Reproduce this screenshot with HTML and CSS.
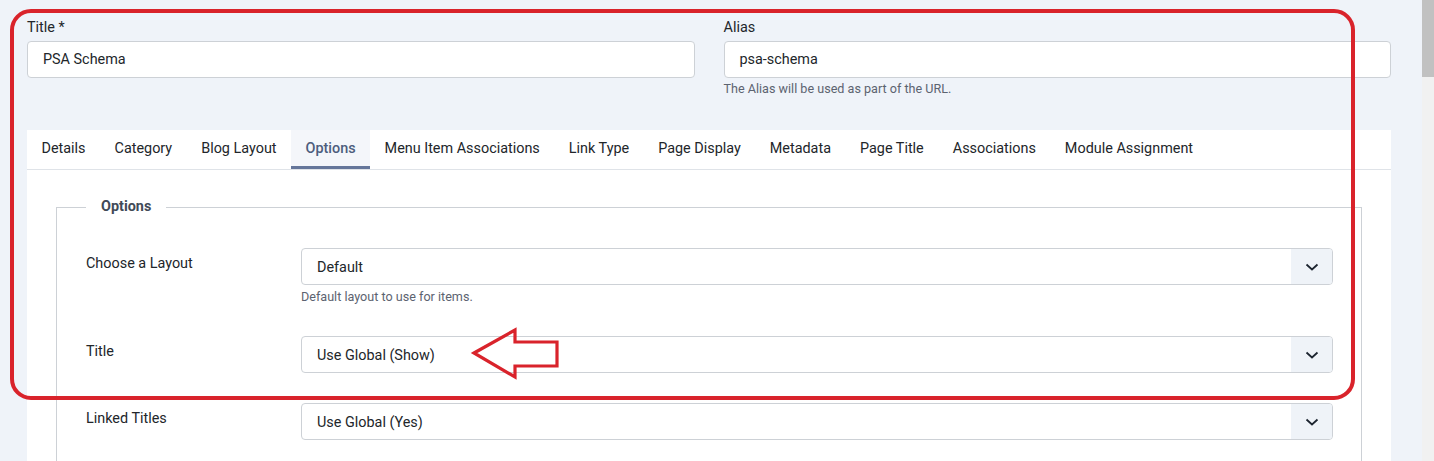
FILE: index.html
```html
<!DOCTYPE html>
<html lang="en">
<head>
    <meta charset="UTF-8">
    <meta name="viewport" content="width=device-width, initial-scale=1.0">
    <title>Edit Menu Item</title>
    <link rel="stylesheet" href="styles.css">
</head>
<body>
<div class="viewport">
    <div class="page">
        <!-- Title / Alias -->
        <div class="top-row">
            <div class="field">
                <label class="field-label">Title *</label>
                <div class="input">PSA Schema</div>
            </div>
            <div class="field">
                <label class="field-label">Alias</label>
                <div class="input">psa-schema</div>
                <div class="help">The Alias will be used as part of the URL.</div>
            </div>
        </div>

        <!-- Tabs -->
        <div class="card">
            <ul class="tabs">
                <li>Details</li>
                <li>Category</li>
                <li>Blog Layout</li>
                <li class="active">Options</li>
                <li>Menu Item Associations</li>
                <li>Link Type</li>
                <li>Page Display</li>
                <li>Metadata</li>
                <li>Page Title</li>
                <li>Associations</li>
                <li>Module Assignment</li>
            </ul>

            <div class="tab-content">
                <fieldset class="options">
                    <legend>Options</legend>

                    <div class="control-group">
                        <div class="control-label">Choose a Layout</div>
                        <div class="controls">
                            <div class="select">
                                <span class="select-value">Default</span>
                                <span class="select-btn"><svg width="14" height="8" viewBox="0 0 14 8"><path d="M1.5 1.5 L7 6.5 L12.5 1.5" fill="none" stroke="#1d2530" stroke-width="1.8"/></svg></span>
                            </div>
                            <div class="help">Default layout to use for items.</div>
                        </div>
                    </div>

                    <div class="control-group">
                        <div class="control-label">Title</div>
                        <div class="controls">
                            <div class="select">
                                <span class="select-value">Use Global (Show)</span>
                                <span class="select-btn"><svg width="14" height="8" viewBox="0 0 14 8"><path d="M1.5 1.5 L7 6.5 L12.5 1.5" fill="none" stroke="#1d2530" stroke-width="1.8"/></svg></span>
                            </div>
                        </div>
                    </div>

                    <div class="control-group">
                        <div class="control-label">Linked Titles</div>
                        <div class="controls">
                            <div class="select">
                                <span class="select-value">Use Global (Yes)</span>
                                <span class="select-btn"><svg width="14" height="8" viewBox="0 0 14 8"><path d="M1.5 1.5 L7 6.5 L12.5 1.5" fill="none" stroke="#1d2530" stroke-width="1.8"/></svg></span>
                            </div>
                        </div>
                    </div>
                </fieldset>
            </div>
        </div>
    </div>

    <!-- fake scrollbar -->
    <div class="scrollbar"><div class="thumb"></div></div>
</div>

<!-- red annotation drawn over the screenshot -->
<svg class="annotation" width="1434" height="461" viewBox="0 0 1434 461">
    <rect x="12" y="11" width="1341" height="387" rx="19" ry="19" fill="none" stroke="#d9232b" stroke-width="4"/>
    <path d="M474 353 L515 330 L515 342 L557 342 L557 366 L515 366 L515 377 Z" fill="none" stroke="#d9232b" stroke-width="3.2" stroke-linejoin="miter"/>
</svg>
</body>
</html>
```

FILE: styles.css
```css
* {
    box-sizing: border-box;
    margin: 0;
    padding: 0;
}

body {
    background-color: #eff3f9;
    color: #22262a;
    font-family: Roboto, 'Liberation Sans', sans-serif;
    font-size: 14.4px;
    width: 1434px;
    height: 461px;
    overflow: hidden;
    position: relative;
}

.viewport {
    display: flex;
    height: 461px;
}

.page {
    flex: 1;
    padding: 16px 31px 0 27px;
}

/* Title / Alias row */
.top-row {
    display: grid;
    grid-template-columns: 1fr 1fr;
    column-gap: 29px;
}

.field-label {
    display: block;
    line-height: 20px;
    padding-top: 2px;
    margin-bottom: 3px;
}

.input {
    height: 37px;
    line-height: 36px;
    padding: 0 15px;
    background-color: #fff;
    border: 1px solid #cdd1d6;
    border-radius: 4px;
}

.help {
    font-size: 12.6px;
    color: #5c6370;
    line-height: 18px;
    margin-top: 2px;
}

/* Card with tabs */
.card {
    margin-top: 32px;
    background-color: #fff;
}

.tabs {
    list-style: none;
    display: flex;
    height: 40px;
    border-bottom: 1px solid #dfe3e8;
}

.tabs li {
    padding: 1px 14.5px 0;
    line-height: 35px;
    border-bottom: 3px solid transparent;
    white-space: nowrap;
}

.tabs li.active {
    background-color: #f4f6fa;
    border-bottom-color: #65769a;
    color: #4d5d7d;
    font-weight: 500;
}

.tab-content {
    padding: 27px 29px 0;
}

.options {
    border: 1px solid #cdd1d6;
    border-bottom: none;
    padding: 31px 28px 30px 29px;
    min-height: 300px;
}

.options legend {
    padding: 0 15px;
    line-height: 20px;
    font-weight: 700;
    color: #414a57;
}

.control-group {
    display: flex;
    margin-bottom: 30px;
}

.control-label {
    width: 215px;
    padding-top: 6px;
    line-height: 20px;
}

.controls {
    flex: 1;
}

.select {
    display: flex;
    height: 37px;
    background-color: #fff;
    border: 1px solid #cdd1d6;
    border-radius: 4px;
    overflow: hidden;
}

.select-value {
    flex: 1;
    padding: 0 15px;
    line-height: 37px;
}

.select-btn {
    width: 41px;
    background-color: #eff3f8;
    display: flex;
    align-items: center;
    justify-content: center;
}

.controls .help {
    margin-top: 3px;
}

/* scrollbar */
.scrollbar {
    width: 12px;
    background-color: #f1f1f1;
}

.thumb {
    height: 77px;
    background-color: #c1c1c1;
}

.annotation {
    position: absolute;
    top: 0;
    left: 0;
    pointer-events: none;
}
```
